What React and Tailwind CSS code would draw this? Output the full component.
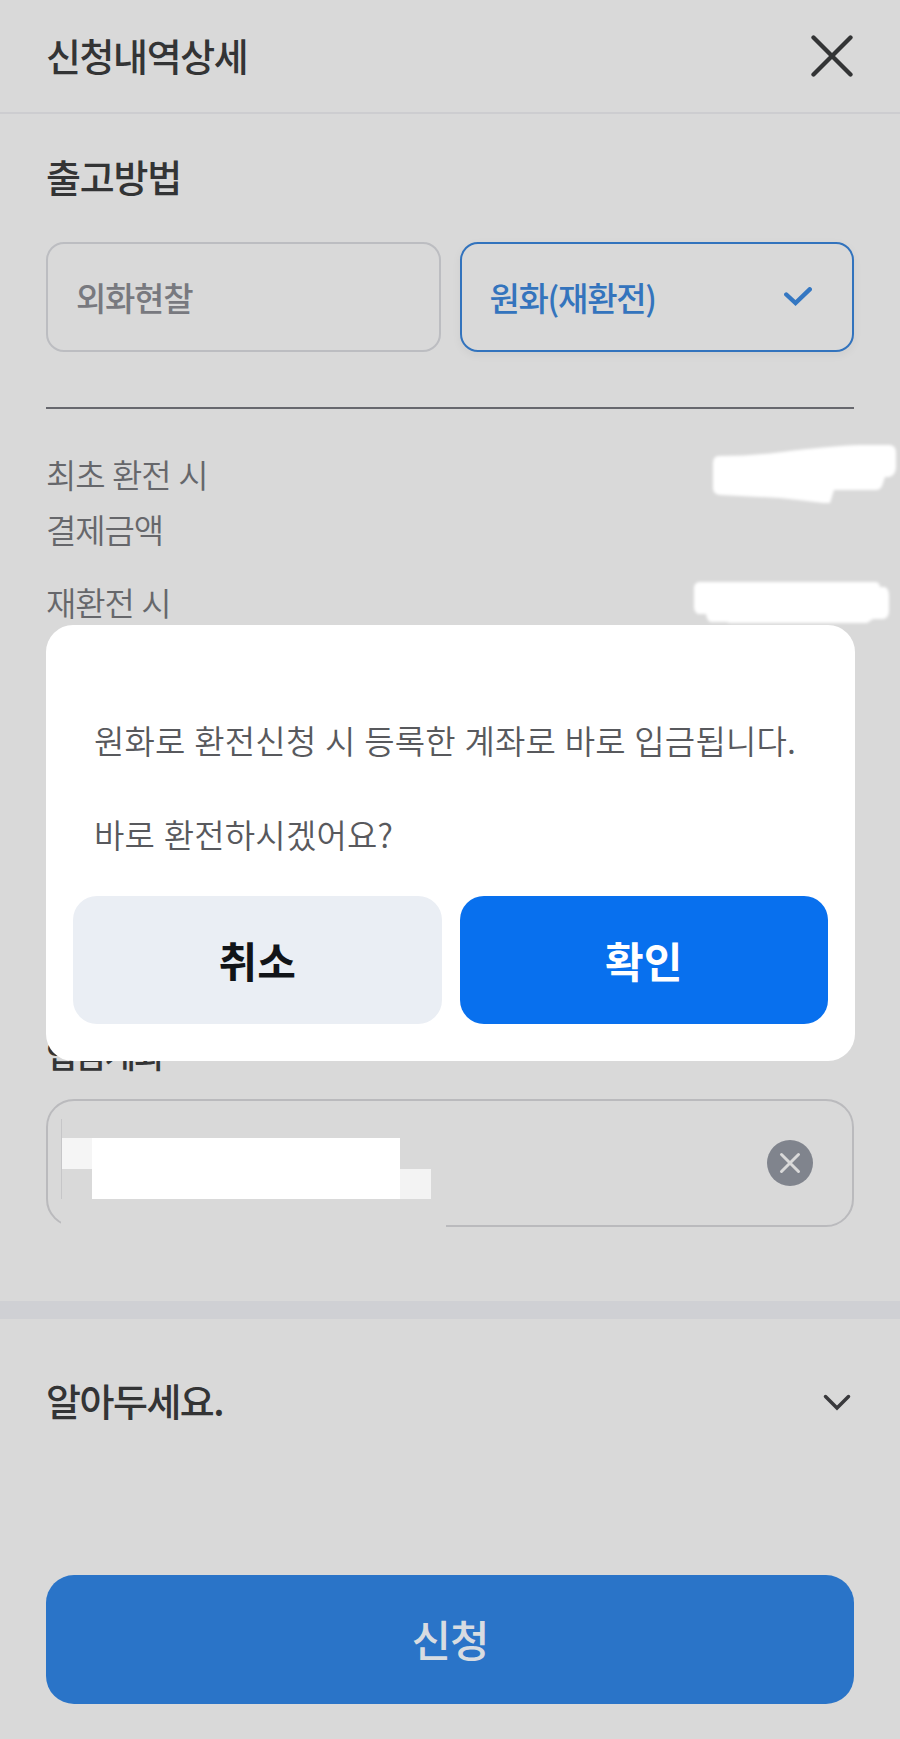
import { useState } from "react";

const METHODS = [
  { id: "cash", label: "외화현찰" },
  { id: "krw", label: "원화(재환전)" },
];

function CloseIcon() {
  return (
    <svg width="42" height="42" viewBox="0 0 42 42" fill="none" stroke="#333435" strokeWidth="4.3" strokeLinecap="round">
      <path d="M2.5 2.5 39.5 39.5M39.5 2.5 2.5 39.5" />
    </svg>
  );
}

function CheckIcon() {
  return (
    <svg width="28" height="20" viewBox="0 0 28 20" fill="none" stroke="#3477c2" strokeWidth="4.4" strokeLinecap="round">
      <path d="M2.3 7.5 11.5 16 25.7 2.3" />
    </svg>
  );
}

function ChevronIcon() {
  return (
    <svg width="28" height="18" viewBox="0 0 28 18" fill="none" stroke="#39393c" strokeWidth="3.5" strokeLinecap="round">
      <path d="M2.5 3.5 14 15 25.5 3.5" />
    </svg>
  );
}

function MethodButton({ label, active, onClick }) {
  return (
    <button
      onClick={onClick}
      className={
        active
          ? "flex-1 h-[110px] px-[28px] flex items-center justify-between rounded-[18px] border-2 border-[#3273bd] text-[#3474bd] shadow-[0_3px_10px_rgba(0,0,0,0.05)]"
          : "flex-1 h-[110px] px-[28px] flex items-center justify-between rounded-[18px] border-2 border-[#bcbdc1] text-[#78797f]"
      }
    >
      <span className="text-[33px] leading-[48px] tracking-[-1.3px] font-medium">{label}</span>
      {active && (
        <span className="mr-[12px]">
          <CheckIcon />
        </span>
      )}
    </button>
  );
}

export default function App() {
  const [method, setMethod] = useState("krw");

  return (
    <div className="relative w-[900px] h-[1739px] overflow-hidden bg-[#d9d9d9] font-['Noto_Sans_CJK_KR',sans-serif]">
      <header className="h-[114px] pl-[46px] pr-[47px] flex items-center justify-between border-b-2 border-[#cdcdd0]">
        <h1 className="-mt-[2px] text-[38px] leading-[56px] tracking-[-1.4px] font-medium text-[#333435]">신청내역상세</h1>
        <CloseIcon />
      </header>

      <section className="px-[46px] pt-[34px]">
        <h2 className="text-[38px] leading-[56px] tracking-[-1.2px] font-medium text-[#333435]">출고방법</h2>
        <div className="mt-[38px] flex gap-[19px]">
          {METHODS.map((m) => (
            <MethodButton key={m.id} label={m.label} active={method === m.id} onClick={() => setMethod(m.id)} />
          ))}
        </div>

        <div className="mt-[55px] h-[2px] bg-[#67686e]" />

        <div className="mt-[38px] text-[33px] leading-[55px] tracking-[-1.1px] [word-spacing:1.3px] font-[350] text-[#66676b]">
          <p>
            최초 환전 시<br />
            결제금액
          </p>
          <p className="mt-[18px]">재환전 시</p>
        </div>
      </section>

      {/* 금액 가림 */}
      <svg className="absolute left-[680px] top-[430px]" width="220" height="200" viewBox="0 0 220 200" fill="#fff">
        <defs>
          <filter id="soft" x="-10%" y="-10%" width="120%" height="120%">
            <feGaussianBlur stdDeviation="1.6" />
          </filter>
        </defs>
        <g filter="url(#soft)">
          <path d="M38 26 Q70 26 102 22 Q150 16 180 15 H210 Q216 16 216 22 V38 Q215 46 209 47 H205 L202 56 Q200 60 196 60 H154 L150 73 H143 Q120 70 100 68 L40 65 Q33 64 33 58 V33 Q33 27 38 26Z" />
          <path d="M19 152 H196 Q200 153 200 157 H205 Q209 159 209 166 V182 Q208 189 203 189 H193 L187 193 H50 L46 192 H31 Q27 191 26 184 H18 Q14 182 14 177 V158 Q14 153 19 152Z" />
        </g>
      </svg>

      <section className="px-[46px] mt-[399px]">
        <h2 className="text-[34px] leading-[50px] tracking-[-1.9px] font-medium text-[#333435]">입금계좌</h2>
        <div className="relative mt-[20px] h-[128px] pr-[39px] flex items-center justify-end rounded-[28px] border-2 border-[#bababd]">
          {/* 계좌번호 가림 */}
          <div className="absolute left-[13px] top-[18px] w-[385px] h-[110px] bg-[#d9d9d9]">
            <div className="h-[80px] pt-[19px] flex border-l border-[#c6c6c8]">
              <div className="w-[30px] h-[31px] bg-[#f5f5f5]" />
              <div className="w-[308px] h-[61px] bg-white" />
              <div className="w-[31px] h-[30px] mt-[31px] bg-[#f3f3f3]" />
            </div>
          </div>
          <button className="size-[46px] flex items-center justify-center rounded-full bg-[#80848d]">
            <svg width="22" height="22" viewBox="0 0 22 22" fill="none" stroke="#d9d9d9" strokeWidth="3" strokeLinecap="round">
              <path d="M2.5 2.5 19.5 19.5M19.5 2.5 2.5 19.5" />
            </svg>
          </button>
        </div>
      </section>

      <div className="mt-[74px] h-[18px] bg-[#cfd0d4]" />

      <section className="pt-[53px] pl-[46px] pr-[49px] flex items-center justify-between">
        <h2 className="text-[38px] leading-[56px] tracking-[-1.5px] font-medium text-[#333435]">알아두세요.</h2>
        <span className="mt-[3px]">
          <ChevronIcon />
        </span>
      </section>

      <div className="px-[46px] mt-[147px]">
        <button className="w-full h-[129px] pb-[3px] rounded-[28px] bg-[#2a74c8] text-[43px] leading-[60px] tracking-[-1px] font-medium text-[#d8dce1]">
          신청
        </button>
      </div>

      {/* 확인 팝업 */}
      <div className="absolute left-[46px] top-[625px] w-[809px] h-[436px] pt-[92px] px-[27px] rounded-[27px] bg-white">
        <p className="pl-[21px] whitespace-nowrap text-[33px] leading-[47.2px] tracking-[0.2px] [word-spacing:1px] font-[350] text-[#58595d]">
          원화로 환전신청 시 등록한 계좌로 바로 입금됩니다.
          <br />
          <br />
          바로 환전하시겠어요?
        </p>
        <div className="mt-[37px] flex gap-[18px]">
          <button className="flex-1 h-[128px] rounded-[24px] bg-[#eaeef4] text-[42px] leading-[60px] font-bold text-[#111418]">취소</button>
          <button className="flex-1 h-[128px] rounded-[24px] bg-[#0870ee] text-[42px] leading-[60px] font-bold text-white">확인</button>
        </div>
      </div>
    </div>
  );
}
